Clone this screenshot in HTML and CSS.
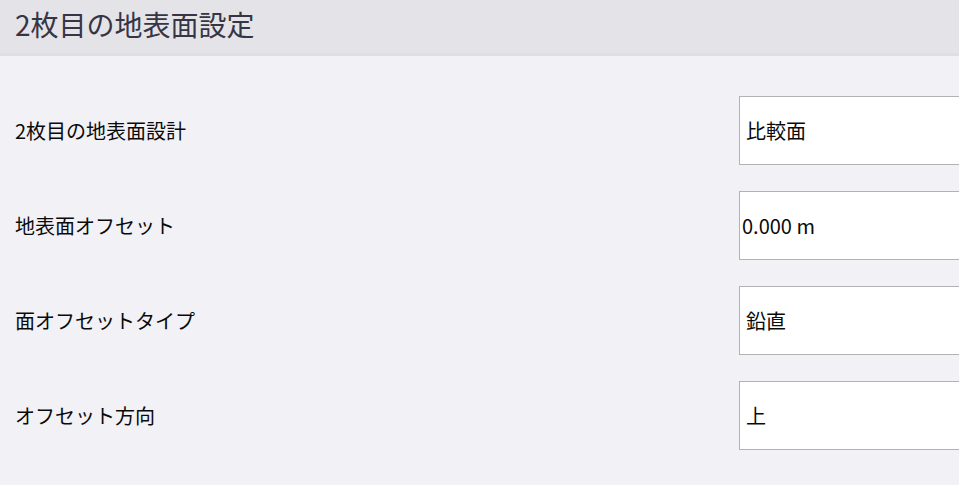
FILE: index.html
```html
<!DOCTYPE html>
<html lang="ja">
<head>
  <meta charset="UTF-8">
  <meta name="viewport" content="width=device-width, initial-scale=1.0">
  <title>2枚目の地表面設定</title>
  <link rel="stylesheet" href="styles.css">
</head>
<body>
  <div class="header">
    <h1>2枚目の地表面設定</h1>
  </div>
  <div class="form">
    <div class="row">
      <div class="label">2枚目の地表面設計</div>
      <div class="field select">比較面</div>
    </div>
    <div class="row">
      <div class="label">地表面オフセット</div>
      <div class="field input">0.000 m</div>
    </div>
    <div class="row">
      <div class="label">面オフセットタイプ</div>
      <div class="field select">鉛直</div>
    </div>
    <div class="row">
      <div class="label">オフセット方向</div>
      <div class="field select">上</div>
    </div>
  </div>
</body>
</html>
```

FILE: styles.css
```css
html, body {
  margin: 0;
  height: 100%;
}
body {
  background-color: #f2f1f6;
  font-family: "Noto Sans CJK JP", "Noto Sans", sans-serif;
  overflow: hidden;
}
.header {
  height: 53px;
  background-color: #e4e3e8;
  border-bottom: 3px solid #dfdee4;
  display: flex;
  align-items: center;
  padding-left: 15px;
}
.header h1 {
  margin: 0;
  font-size: 28px;
  font-weight: normal;
  color: #363545;
  line-height: 1;
  padding-bottom: 6px;
}
.form {
  padding-top: 40px;
  display: flex;
  flex-direction: column;
  gap: 26px;
}
.row {
  display: flex;
  align-items: center;
  height: 69px;
  overflow: hidden;
}
.label {
  flex: 0 0 724px;
  padding-left: 15px;
  font-size: 20px;
  color: #0a0a0a;
}
.field {
  box-sizing: border-box;
  height: 69px;
  flex: 0 0 260px;
  background-color: #fff;
  border: 1px solid #b2b2b4;
  display: flex;
  align-items: center;
  font-size: 20px;
  color: #0a0a0a;
}
.field.select {
  padding-left: 6px;
}
.field.input {
  padding-left: 2px;
}
```
